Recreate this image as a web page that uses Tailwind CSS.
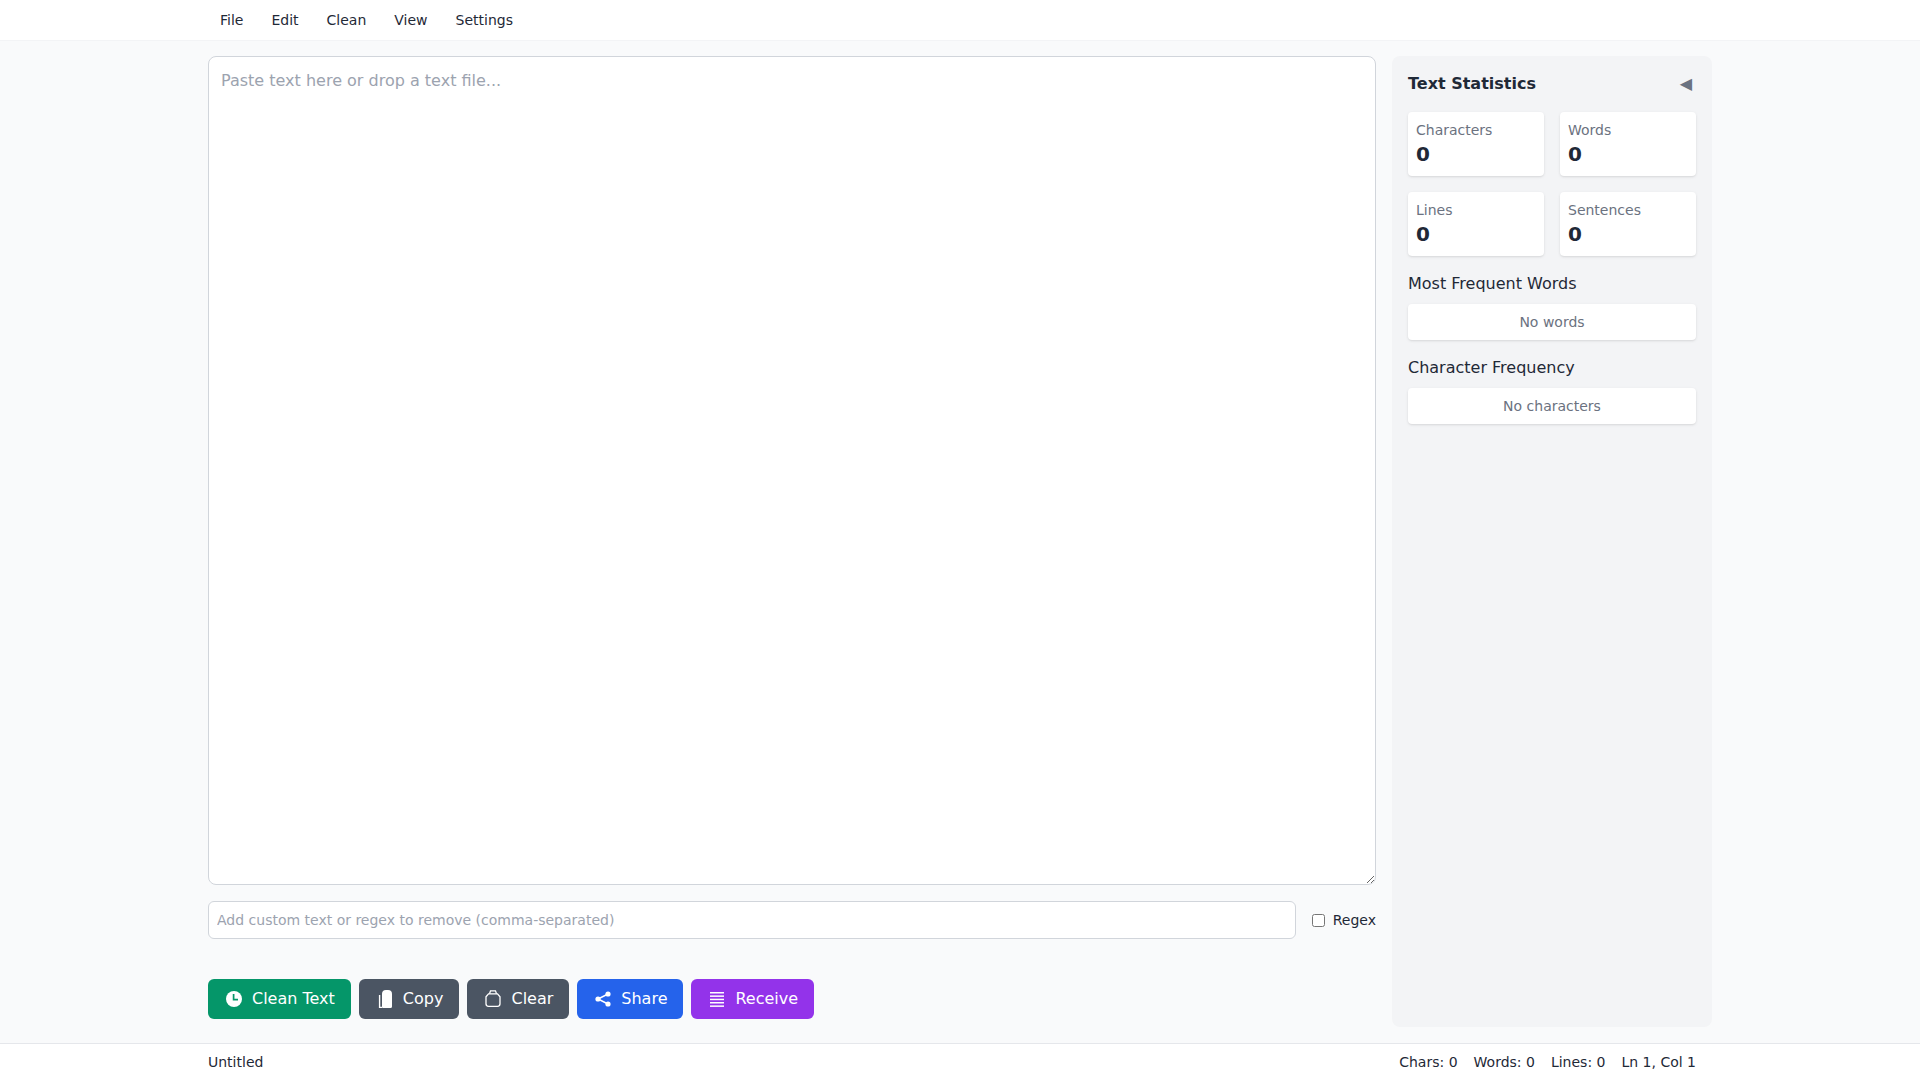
<!DOCTYPE html>
<html lang="en">
<head>
  <meta charset="UTF-8">
  <meta name="viewport" content="width=device-width, initial-scale=1.0">
  <title>Text Cleaner</title>
  <script src="https://cdn.jsdelivr.net/npm/@tailwindcss/browser@4"></script>
</head>
<body class="h-screen flex flex-col overflow-hidden bg-[#f9fafb] text-[#1f2937] font-['DejaVu_Sans',sans-serif]">
  <!-- Menu bar -->
  <header class="bg-white border-b border-[#f3f4f6] h-[41px] shrink-0">
    <nav class="max-w-screen-2xl mx-auto px-4 flex gap-1 text-sm leading-5 h-10 items-center">
      <a class="px-3">File</a>
      <a class="px-3">Edit</a>
      <a class="px-3">Clean</a>
      <a class="px-3">View</a>
      <a class="px-3">Settings</a>
    </nav>
  </header>

  <main class="flex-1 min-h-0 w-full max-w-screen-2xl mx-auto px-4 pt-[15px] pb-4 flex gap-4">
    <!-- Editor -->
    <section class="flex-1 min-w-0 flex flex-col pb-2">
      <textarea class="flex-1 w-full bg-white border border-[#d1d5db] rounded-lg p-3 text-base leading-6 placeholder:text-[#9ca3af] outline-none" placeholder="Paste text here or drop a text file..."></textarea>
      <div class="mt-4 flex items-center gap-4">
        <input class="flex-1 bg-white border border-[#d1d5db] rounded-md px-2 py-2 text-sm leading-5 placeholder:text-[#9ca3af] outline-none" placeholder="Add custom text or regex to remove (comma-separated)">
        <label class="flex items-center gap-2 text-sm leading-5">
          <input type="checkbox" class="w-[13px] h-[13px]">
          Regex
        </label>
      </div>
      <div class="mt-10 flex gap-2 text-white">
        <button class="flex items-center px-4 py-2 rounded-md bg-[#059669]">
          <svg class="w-5 h-5 mr-2" viewBox="0 0 20 20"><circle cx="10" cy="10" r="8" fill="currentColor"/><path d="M9.6 5v5.6H14" fill="none" stroke="#059669" stroke-width="1.7"/></svg>
          Clean Text
        </button>
        <button class="flex items-center px-4 py-2 rounded-md bg-[#4b5563]">
          <svg class="w-5 h-5 mr-2" viewBox="0 0 20 20"><path d="M7 5a4 4 0 014-4h2a4 4 0 014 4v12.5a1.5 1.5 0 01-1.5 1.5h-8A1.5 1.5 0 017 17.5V5z" fill="currentColor"/><path d="M4.6 6v12.4H7" fill="none" stroke="currentColor" stroke-width="1.4"/></svg>
          Copy
        </button>
        <button class="flex items-center px-4 py-2 rounded-md bg-[#4b5563]">
          <svg class="w-5 h-5 mr-2" viewBox="0 0 20 20" fill="none" stroke="currentColor" stroke-width="1.3"><path d="M6.5 4.8l1-3h5l1 3"/><path d="M5.5 4.8h9l2.5 3v7a2.5 2.5 0 01-2.5 2.5h-9A2.5 2.5 0 013 14.800v-7z"/></svg>
          Clear
        </button>
        <button class="flex items-center px-4 py-2 rounded-md bg-[#2563eb]">
          <svg class="w-5 h-5 mr-2" viewBox="0 0 20 20" fill="currentColor"><circle cx="15" cy="5" r="2.6"/><circle cx="5" cy="10" r="2.6"/><circle cx="15" cy="15" r="2.6"/><path d="M15 5L5 10l10 5" fill="none" stroke="currentColor" stroke-width="1.5"/></svg>
          Share
        </button>
        <button class="flex items-center px-4 py-2 rounded-md bg-[#9333ea]">
          <svg class="w-5 h-5 mr-2" viewBox="0 0 20 20" fill="currentColor"><rect x="3" y="3" width="14" height="1.5"/><rect x="3" y="6.4" width="14" height="1.5"/><rect x="3" y="9.700" width="14" height="1.5"/><rect x="3" y="13" width="14" height="1.5"/><rect x="3" y="16.400" width="14" height="1.5"/></svg>
          Receive
        </button>
      </div>
    </section>

    <!-- Statistics panel -->
    <aside class="w-80 shrink-0 bg-[#f3f4f6] rounded-lg p-4">
      <div class="flex items-start justify-between h-7 mb-3">
        <h2 class="text-base leading-6 font-bold">Text Statistics</h2>
        <span class="text-[#6b7280] text-base leading-6 pr-1">◀</span>
      </div>
      <div class="grid grid-cols-2 gap-4">
        <div class="bg-white rounded p-2 shadow-sm"><div class="text-sm leading-5 text-[#6b7280]">Characters</div><div class="text-xl leading-7 font-bold">0</div></div>
        <div class="bg-white rounded p-2 shadow-sm"><div class="text-sm leading-5 text-[#6b7280]">Words</div><div class="text-xl leading-7 font-bold">0</div></div>
        <div class="bg-white rounded p-2 shadow-sm"><div class="text-sm leading-5 text-[#6b7280]">Lines</div><div class="text-xl leading-7 font-bold">0</div></div>
        <div class="bg-white rounded p-2 shadow-sm"><div class="text-sm leading-5 text-[#6b7280]">Sentences</div><div class="text-xl leading-7 font-bold">0</div></div>
      </div>
      <h3 class="mt-4 mb-2 text-base leading-6">Most Frequent Words</h3>
      <div class="bg-white rounded p-2 shadow-sm text-sm leading-5 text-[#6b7280] text-center">No words</div>
      <h3 class="mt-4 mb-2 text-base leading-6">Character Frequency</h3>
      <div class="bg-white rounded p-2 shadow-sm text-sm leading-5 text-[#6b7280] text-center">No characters</div>
    </aside>
  </main>

  <!-- Status bar -->
  <footer class="bg-white border-t border-[#e5e7eb] shrink-0">
    <div class="max-w-screen-2xl mx-auto px-4 py-2 pr-8 flex justify-between text-sm leading-5">
      <span>Untitled</span>
      <div class="flex gap-4">
        <span>Chars: 0</span>
        <span>Words: 0</span>
        <span>Lines: 0</span>
        <span>Ln 1, Col 1</span>
      </div>
    </div>
  </footer>
</body>
</html>
